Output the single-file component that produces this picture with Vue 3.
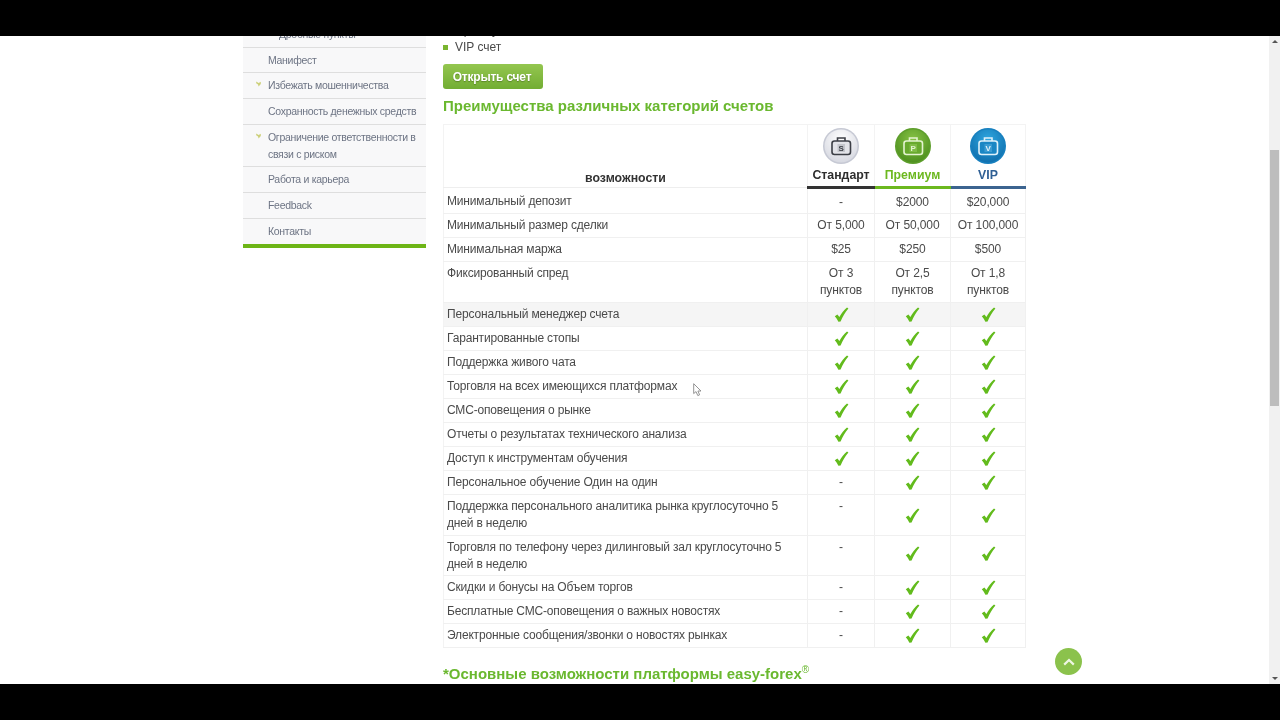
<template>
  <div class="screen">
    <div class="black-bar"></div>

    <div class="viewport">
      <div class="page">
        <aside class="sidebar">
          <ul class="side-menu">
            <li v-for="item in menu" :key="item.label" class="side-item">
              <span class="side-mark">
                <svg v-if="item.mark" width="5" height="6" viewBox="0 0 5 6">
                  <path d="M0.2 0.4 L2.6 2 L4.8 0.8 L4.8 3 L2.6 5.6 L2 3.6 L0.2 2.2 Z" fill="#cdd07a" />
                </svg>
              </span>
              <span class="side-label" :class="{ 'is-sub': item.sub }">{{ item.label }}</span>
            </li>
          </ul>
        </aside>

        <main class="content">
          <ul class="account-list">
            <li>Премиум счет</li>
            <li>VIP счет</li>
          </ul>
          <button class="open-btn">Открыть счет</button>
          <h2 class="section-title">Преимущества различных категорий счетов</h2>

          <table class="compare">
            <colgroup>
              <col class="col-name" />
              <col class="col-std" />
              <col class="col-prem" />
              <col class="col-vip" />
            </colgroup>
            <thead>
              <tr>
                <th class="head-name">возможности</th>
                <th v-for="plan in plans" :key="plan.name" class="head-plan" :class="plan.cls">
                  <svg class="plan-icon" width="38" height="38" viewBox="0 0 38 38">
                    <defs>
                      <radialGradient :id="'disc-' + plan.cls" cx="50%" cy="30%" r="75%">
                        <stop offset="0%" :stop-color="plan.light" />
                        <stop offset="100%" :stop-color="plan.dark" />
                      </radialGradient>
                    </defs>
                    <circle cx="19" cy="19" r="18" :fill="plan.rim" />
                    <circle cx="19" cy="19" r="16.5" :fill="'url(#disc-' + plan.cls + ')'" />
                    <rect x="10" y="14" width="18.5" height="13.5" rx="2.5" :fill="plan.caseFill" :stroke="plan.stroke" stroke-width="1.6" />
                    <path d="M15.5 14 V11 H23 V14" fill="none" :stroke="plan.stroke" stroke-width="1.6" />
                    <rect x="15.5" y="17" width="7.5" height="8" :fill="plan.tag" />
                    <text x="19.2" y="24" text-anchor="middle" class="plan-letter" :fill="plan.stroke">{{ plan.letter }}</text>
                  </svg>
                  <span class="plan-name">{{ plan.name }}</span>
                </th>
              </tr>
            </thead>
            <tbody>
              <tr
                v-for="row in rows"
                :key="row.label"
                :class="{ 'is-shaded': row.shaded, 'is-tight': row.tight }"
              >
                <td class="cell-name">{{ row.label }}</td>
                <td
                  v-for="(val, i) in row.values"
                  :key="i"
                  class="cell-val"
                  :class="{ 'is-check': val === true }"
                >
                  <svg v-if="val === true" class="check" width="15" height="15" viewBox="0 0 15 15">
                    <path d="M0.8 9.2 L3.4 7.4 L5.4 10 C7.5 6.2 10 3 13 0.6 L14.4 1.4 C11 5.4 8.6 9.6 6.6 14.6 L4.4 14.8 C3.4 12.6 2.2 10.8 0.8 9.2 Z" fill="#62bb1c" />
                  </svg>
                  <template v-else>{{ val }}</template>
                </td>
              </tr>
            </tbody>
          </table>

          <h2 class="section-title second">*Основные возможности платформы easy-forex<sup>®</sup></h2>
        </main>
      </div>

      <div class="scrollbar">
        <span class="arrow up"></span>
        <div class="thumb"></div>
        <span class="arrow down"></span>
      </div>

      <!-- over the content -->
      <a class="to-top">
        <svg width="12" height="8" viewBox="0 0 12 8">
          <path d="M1.2 6.6 L6 2 L10.8 6.6" fill="none" stroke="#eef6e2" stroke-width="2.2" />
        </svg>
      </a>
      <svg class="cursor" width="10" height="14" viewBox="0 0 10 14">
        <path d="M0.7 0.7 V10.6 L3 8.6 L4.8 12.6 L6.6 11.8 L4.9 8 L8 8 Z" fill="#fff" stroke="#888" stroke-width="0.9" />
      </svg>
    </div>

    <div class="black-bar"></div>
  </div>
</template>

<script setup>
const menu = [
  { label: 'Дробные пункты', sub: true },
  { label: 'Манифест' },
  { label: 'Избежать мошенничества', mark: true },
  { label: 'Сохранность денежных средств' },
  { label: 'Ограничение ответственности в связи с риском', mark: true },
  { label: 'Работа и карьера' },
  { label: 'Feedback' },
  { label: 'Контакты' }
]

const plans = [
  { name: 'Стандарт', cls: 'std', letter: 'S', light: '#ffffff', dark: '#d4d6df', rim: '#c6c9d4', stroke: '#3c3f46', caseFill: '#e2e3e8', tag: '#c4c6cc' },
  { name: 'Премиум', cls: 'prem', letter: 'P', light: '#86c245', dark: '#4a8c1c', rim: '#5d9e2b', stroke: '#e4f3d0', caseFill: '#68a92e', tag: '#7fbb45' },
  { name: 'VIP', cls: 'vip', letter: 'V', light: '#2ea6df', dark: '#0e6cab', rim: '#1780bf', stroke: '#dff1fa', caseFill: '#1a86c4', tag: '#3a9bd2' }
]

const yes = [true, true, true]
const partial = ['-', true, true]

const rows = [
  { label: 'Минимальный депозит', values: ['-', '$2000', '$20,000'] },
  { label: 'Минимальный размер сделки', values: ['От 5,000', 'От 50,000', 'От 100,000'] },
  { label: 'Минимальная маржа', values: ['$25', '$250', '$500'] },
  { label: 'Фиксированный спред', values: ['От 3 пунктов', 'От 2,5 пунктов', 'От 1,8 пунктов'] },
  { label: 'Персональный менеджер счета', values: yes, shaded: true },
  { label: 'Гарантированные стопы', values: yes },
  { label: 'Поддержка живого чата', values: yes },
  { label: 'Торговля на всех имеющихся платформах', values: yes },
  { label: 'СМС-оповещения о рынке', values: yes },
  { label: 'Отчеты о результатах технического анализа', values: yes },
  { label: 'Доступ к инструментам обучения', values: yes },
  { label: 'Персональное обучение Один на один', values: partial },
  { label: 'Поддержка персонального аналитика рынка круглосуточно 5 дней в неделю', values: partial },
  { label: 'Торговля по телефону через дилинговый зал круглосуточно 5 дней в неделю', values: partial, tight: true },
  { label: 'Скидки и бонусы на Объем торгов', values: partial },
  { label: 'Бесплатные СМС-оповещения о важных новостях', values: partial },
  { label: 'Электронные сообщения/звонки о новостях рынках', values: partial }
]
</script>

<style>
html,
body {
  margin: 0;
  background: #000;
}
</style>

<style scoped>
.screen {
  width: 1280px;
  height: 720px;
  display: flex;
  flex-direction: column;
  font-family: "Liberation Sans", Arial, sans-serif;
  color: #4a4a4a;
  overflow: hidden;
}

.black-bar {
  position: relative;
  height: 36px;
  flex: none;
  background: #000;
}

.viewport {
  position: relative;
  height: 648px;
  flex: none;
  display: flex;
  background: #fff;
  overflow: hidden;
  filter: blur(0.3px);
}

.page {
  flex: 1;
  display: flex;
  align-items: flex-start;
  gap: 17px;
  padding-left: 243px;
}

/* sidebar */
.sidebar {
  width: 183px;
  flex: none;
  margin-top: -14px;
}

.side-menu {
  list-style: none;
  margin: 0;
  padding: 0;
  background: #f8f8f9;
  border-bottom: 4px solid #6db516;
}

.side-item {
  display: flex;
  padding: 4px 0 3.7px;
  border-bottom: 1px solid #dedede;
  font-size: 10.5px;
  letter-spacing: -0.3px;
  line-height: 17px;
  color: #6d7484;
}

.side-item:last-child {
  border-bottom: none;
}

.side-mark {
  width: 25px;
  flex: none;
  display: flex;
  justify-content: flex-end;
  padding: 4px 7px 0 0;
  box-sizing: border-box;
  align-items: flex-start;
}

.side-label.is-sub {
  padding-left: 11px;
}

/* content */
.content {
  width: 583px;
  flex: none;
  margin-top: -14px;
}

.account-list {
  list-style: none;
  margin: 0 0 8px;
  padding: 0;
  font-size: 12px;
  line-height: 17px;
}

.account-list li {
  position: relative;
  padding-left: 12px;
}

.account-list li::before {
  content: "";
  position: absolute;
  left: 0;
  top: 6px;
  width: 5px;
  height: 5px;
  background: #7ab52f;
}

.open-btn {
  display: block;
  width: 100px;
  height: 25px;
  padding: 0 2px 0 0;
  border: none;
  border-radius: 3px;
  background: linear-gradient(#94c64f, #72ad33);
  color: #fff;
  font-family: inherit;
  font-size: 12px;
  letter-spacing: -0.2px;
  font-weight: bold;
  text-shadow: 0 1px 1px rgba(60, 90, 20, 0.5);
}

.section-title {
  margin: 8px 0 10px;
  font-size: 15px;
  line-height: 17px;
  font-weight: bold;
  color: #6ab82f;
}

.section-title.second {
  margin-top: 17px;
}

.section-title sup {
  font-size: 10px;
  font-weight: normal;
  line-height: 0;
}

/* table */
.compare {
  width: 582px;
  table-layout: fixed;
  border-collapse: collapse;
  border: 1px solid #f3f3f3;
  font-size: 12px;
  letter-spacing: -0.1px;
}

.col-name {
  width: 364px;
}

.col-std {
  width: 67px;
}

.col-prem {
  width: 76px;
}

.col-vip {
  width: 75px;
}

.compare th {
  padding: 0;
  font-size: 12.3px;
  letter-spacing: 0;
  font-weight: bold;
  vertical-align: bottom;
  border-right: 1px solid #f3f3f3;
}

.head-name {
  border-bottom: 1px solid #eeeeee;
  line-height: 17px;
  color: #333;
}

.head-plan {
  line-height: 15px;
  border-bottom: 3px solid #333;
}

.head-plan.std {
  color: #2e2e2e;
}

.head-plan.prem {
  color: #6cb81f;
  border-bottom-color: #6cb81f;
}

.head-plan.vip {
  color: #2f5f94;
  border-bottom-color: #3c6490;
}

.plan-icon {
  display: block;
  margin: 2px auto 0;
}

.plan-name {
  display: block;
  padding: 3px 0 3px;
}

.plan-letter {
  font-size: 8px;
  font-weight: bold;
  letter-spacing: 0;
}

.compare td {
  padding: 3px 3px;
  line-height: 17px;
  vertical-align: top;
  border-bottom: 1px solid #f0f0f0;
  border-right: 1px solid #f0f0f0;
}

.compare tbody tr:first-child td {
  padding-top: 5px;
  padding-bottom: 2px;
}

.compare .is-tight td {
  line-height: 16.5px;
}

.cell-name {
  letter-spacing: -0.17px;
}

.cell-val {
  text-align: center;
}

.cell-val.is-check {
  vertical-align: middle;
  padding: 0;
  line-height: 0;
}

.is-shaded td {
  background: #f5f5f5;
}

.check {
  display: inline-block;
}

/* scrollbar */
.scrollbar {
  position: relative;
  width: 11px;
  flex: none;
  background: #f1f1f1;
}

.thumb {
  position: absolute;
  top: 114px;
  left: 1px;
  width: 9px;
  height: 256px;
  background: #bdbdbd;
}

.arrow {
  position: absolute;
  left: 3px;
  border-left: 3px solid transparent;
  border-right: 3px solid transparent;
}

.arrow.up {
  top: 4px;
  border-bottom: 3px solid #555;
}

.arrow.down {
  bottom: 4px;
  border-top: 3px solid #555;
}

/* floating */
.to-top {
  position: absolute;
  left: 1055px;
  top: 612px;
  width: 27px;
  height: 27px;
  border-radius: 50%;
  background: #8bc24c;
  display: flex;
  align-items: center;
  justify-content: center;
}

.cursor {
  position: absolute;
  left: 693px;
  top: 347px;
}
</style>
